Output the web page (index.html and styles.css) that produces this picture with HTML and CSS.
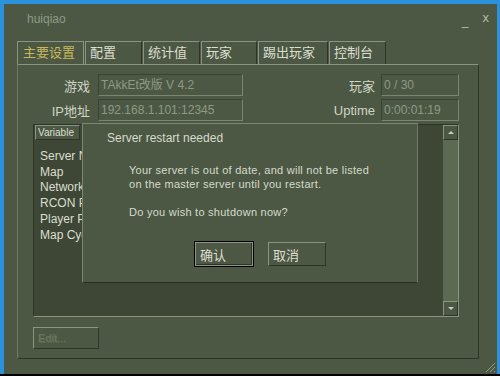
FILE: index.html
```html
<!DOCTYPE html>
<html lang="zh-cn">
<head>
  <meta charset="UTF-8">
  <meta name="viewport" content="width=device-width, initial-scale=1.0">
  <title>huiqiao</title>
  <link rel="stylesheet" href="styles.css">
</head>
<body>
  <div class="window">
    <div class="titlebar">
      <span class="title">huiqiao</span>
      <span class="controls"><span class="min">_</span><span class="close">x</span></span>
    </div>

    <div class="tabs">
      <div class="tab active t1">主要设置</div>
      <div class="tab t2">配置</div>
      <div class="tab t3">统计值</div>
      <div class="tab t4">玩家</div>
      <div class="tab t5">踢出玩家</div>
      <div class="tab t6">控制台</div>
    </div>

    <div class="panel">
      <div class="row">
        <span class="lbl">游戏</span>
        <div class="field wide">TAkkEt改版 V 4.2</div>
        <span class="lbl right">玩家</span>
        <div class="field short">0 / 30</div>
      </div>
      <div class="row">
        <span class="lbl">IP地址</span>
        <div class="field wide">192.168.1.101:12345</div>
        <span class="lbl right">Uptime</span>
        <div class="field short">0:00:01:19</div>
      </div>

      <div class="list">
        <div class="list-main">
          <div class="list-head"><span class="col">Variable</span></div>
          <ul class="items">
            <li>Server Name</li>
            <li>Map</li>
            <li>Network</li>
            <li>RCON Password</li>
            <li>Player Password</li>
            <li>Map Cycle</li>
          </ul>
        </div>
        <div class="scrollbar">
          <div class="sbtn"><span class="arrow up"></span></div>
          <div class="track"></div>
          <div class="sbtn"><span class="arrow down"></span></div>
        </div>
      </div>

      <div class="actions">
        <button type="button" class="btn disabled">Edit...</button>
      </div>
    </div>

    <div class="grip">
      <svg width="12" height="12" viewBox="0 0 12 12">
        <line x1="11" y1="2" x2="2" y2="11" stroke="#8e9a84" stroke-width="1"/>
        <line x1="11" y1="6" x2="6" y2="11" stroke="#8e9a84" stroke-width="1"/>
        <line x1="11" y1="10" x2="10" y2="11" stroke="#8e9a84" stroke-width="1"/>
      </svg>
    </div>

    <!-- dialog over the main window -->
    <div class="dialog">
      <div class="dlg-title">Server restart needed</div>
      <div class="dlg-text">
        <p>Your server is out of date, and will not be listed<br>on the master server until you restart.</p>
        <p class="last">Do you wish to shutdown now?</p>
      </div>
      <div class="dlg-buttons">
        <button type="button" class="btn focus">确认</button>
        <button type="button" class="btn">取消</button>
      </div>
    </div>
  </div>
</body>
</html>
```

FILE: styles.css
```css
html, body {
  margin: 0;
  padding: 0;
}
body {
  width: 500px;
  height: 374px;
  background-color: #2a92da;
  border-bottom: 2px solid #000;
  overflow: hidden;
  font-family: "Liberation Sans", "Noto Sans CJK SC", sans-serif;
  font-size: 11px;
  color: #d6dacb;
}
.window {
  position: relative;
  margin: 4px 3px 0 4px;
  height: 370px;
  background-color: #4c5844;
  box-sizing: border-box;
}
.titlebar {
  display: flex;
  justify-content: space-between;
  height: 37px;
  padding: 8px 8px 0 23px;
  box-sizing: border-box;
  line-height: 14px;
}
.title {
  color: #8f9a84;
  font-size: 12px;
}
.controls {
  display: flex;
  gap: 14px;
  color: #b4bcaa;
  font-size: 12px;
}
.controls .min {
  margin-top: 2px;
}
.controls .close {
  margin-top: -1px;
  font-size: 13px;
}
.tabs {
  display: flex;
  gap: 1px;
  margin-left: 13px;
  height: 23px;
}
.tab {
  height: 23px;
  box-sizing: border-box;
  border-top: 1px solid #8a9480;
  border-left: 1px solid #8a9480;
  border-right: 1px solid #2e3528;
  padding: 2px 0 0 4px;
  font-size: 13px;
  line-height: 18px;
  color: #dcdfd0;
}
.tab.active {
  color: #c8b85a;
  border-right-color: #8a9480;
  padding-left: 5px;
}
.t1 { width: 67px; }
.t2 { width: 57px; }
.t3 { width: 57px; }
.t4 { width: 56px; }
.t5 { width: 70px; }
.t6 { width: 57px; }
.panel {
  margin-left: 13px;
  width: 462px;
  height: 295px;
  box-sizing: border-box;
  border-top: 1px solid #8a9480;
  border-left: 1px solid #6f7a66;
  border-right: 1px solid #2e3528;
  border-bottom: 1px solid #2e3528;
  padding: 9px 19px 0 0;
}
.row {
  display: flex;
  align-items: center;
  height: 22px;
  margin-bottom: 3px;
}
.lbl {
  width: 72px;
  margin-right: 8px;
  text-align: right;
  font-size: 13px;
  color: #d0d4c4;
}
.lbl.right {
  flex: 1;
  width: auto;
  margin-right: 6px;
}
.field {
  height: 22px;
  box-sizing: border-box;
  border-top: 1px solid #3a4334;
  border-left: 1px solid #3a4334;
  border-right: 1px solid #7b866f;
  border-bottom: 1px solid #7b866f;
  padding: 3px 0 0 2px;
  font-size: 12px;
  line-height: 15px;
  color: #8e9985;
}
.field.wide { width: 145px; }
.field.short { width: 78px; }
.list {
  display: flex;
  margin: 3px 0 0 15px;
  width: 426px;
  height: 193px;
  box-sizing: border-box;
  border-top: 1px solid #2e3528;
  border-left: 1px solid #2e3528;
  border-right: 1px solid #8a9480;
  border-bottom: 1px solid #8a9480;
  background-color: #3e4736;
}
.list-main {
  flex: 1;
  padding-left: 1px;
}
.list-head {
  display: flex;
}
.col {
  width: 45px;
  height: 15px;
  box-sizing: border-box;
  border-top: 1px solid #8a9480;
  border-left: 1px solid #8a9480;
  border-right: 1px solid #2e3528;
  border-bottom: 1px solid #2e3528;
  background-color: #4c5844;
  padding-left: 2px;
  font-size: 10px;
  line-height: 13px;
  color: #dcdfd0;
}
.items {
  list-style: none;
  margin: 9px 0 0 0;
  padding: 0 0 0 5px;
}
.items li {
  font-size: 12px;
  line-height: 15.7px;
  color: #dadecf;
  white-space: nowrap;
}
.scrollbar {
  display: flex;
  flex-direction: column;
  width: 15px;
  background-color: #5d6a53;
}
.track {
  flex: 1;
}
.sbtn {
  display: flex;
  align-items: center;
  justify-content: center;
  height: 15px;
  box-sizing: border-box;
  border-top: 1px solid #8a9480;
  border-left: 1px solid #8a9480;
  border-right: 1px solid #2e3528;
  border-bottom: 1px solid #2e3528;
  background-color: #4c5844;
}
.arrow {
  width: 0;
  height: 0;
  border-left: 3px solid transparent;
  border-right: 3px solid transparent;
}
.arrow.up {
  border-bottom: 3px solid #c8ccbc;
}
.arrow.down {
  border-top: 3px solid #c8ccbc;
}
.actions {
  margin: 10px 0 0 15px;
}
.btn {
  height: 22px;
  box-sizing: border-box;
  border-top: 1px solid #8a9480;
  border-left: 1px solid #8a9480;
  border-right: 1px solid #2e3528;
  border-bottom: 1px solid #2e3528;
  background-color: #4c5844;
  font-family: "Liberation Sans", "Noto Sans CJK SC", sans-serif;
  font-size: 13px;
  color: #dcdfd0;
  text-align: left;
  padding: 0 0 0 4px;
  cursor: pointer;
}
.btn.disabled {
  width: 66px;
  font-size: 11px;
  color: #6c7862;
  text-shadow: 1px 1px 0 #5c684f;
  cursor: default;
}
.grip {
  position: absolute;
  right: 1px;
  bottom: 1px;
  width: 12px;
  height: 12px;
}
.dialog {
  position: absolute;
  left: 78px;
  top: 119px;
  width: 336px;
  height: 160px;
  box-sizing: border-box;
  border-top: 1px solid #7d8872;
  border-left: 1px solid #7d8872;
  border-right: 1px solid #6d7864;
  border-bottom: 1px solid #262d21;
  background-color: #4c5844;
  padding: 7px 0 0 24px;
}
.dlg-title {
  font-size: 12px;
  line-height: 14px;
  color: #d6dacb;
}
.dlg-text {
  margin: 18px 0 0 22px;
  font-size: 11px;
  line-height: 14px;
  letter-spacing: 0.26px;
}
.dlg-text p {
  margin: 0 0 14px 0;
}
.dlg-text p.last {
  margin-bottom: 0;
}
.dlg-buttons {
  display: flex;
  gap: 15px;
  margin: 23px 0 0 88px;
}
.dlg-buttons .btn {
  width: 58px;
  height: 24px;
}
.dlg-buttons .btn.focus {
  outline: 1px solid #000;
  outline-offset: 0;
  border: 1px solid #8a9480;
  box-shadow: inset -1px -1px 0 #2e3528;
}
```
